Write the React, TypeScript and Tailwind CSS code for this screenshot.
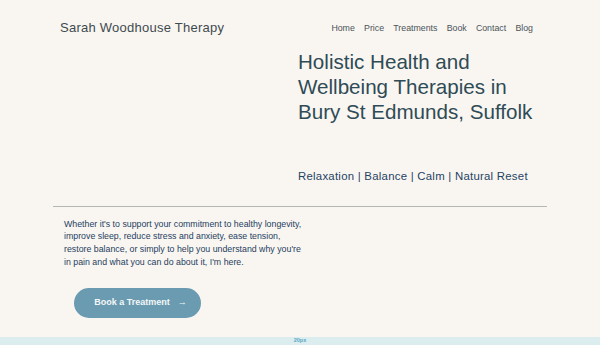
export default function App() {
  const nav = ["Home", "Price", "Treatments", "Book", "Contact", "Blog"];
  return (
    <div className="w-[600px] h-[350px] overflow-hidden bg-white font-['Liberation_Sans',Arial,sans-serif]">
      <div className="bg-[#f9f6f2] h-[337px] flex flex-col">
        <header className="flex items-center justify-between pl-[60px] pr-[67px] pt-[18px]">
          <div className="text-[13px] text-[#3f4a4e] tracking-[0.25px]">Sarah Woodhouse Therapy</div>
          <nav className="flex gap-[9.2px] text-[8.8px] text-[#4a5458] pt-[1px]">
            {nav.map((n) => (
              <span key={n}>{n}</span>
            ))}
          </nav>
        </header>

        <div className="pl-[298px] pt-[11px]">
          <h1 className="text-[20.6px] leading-[25px] text-[#2f4b55]">
            Holistic Health and
            <br />
            Wellbeing Therapies in
            <br />
            Bury St Edmunds, Suffolk
          </h1>
          <p className="mt-[44px] text-[11.4px] text-[#1f4363] tracking-[0.25px]">
            Relaxation | Balance | Calm | Natural Reset
          </p>
        </div>

        <div className="mx-[53px] mt-[21px] border-t border-[#b3b8b0]" />

        <p className="pl-[64px] pt-[11px] text-[8.8px] leading-[12.8px] text-[#253e5e]">
          Whether it's to support your commitment to healthy longevity,
          <br />
          improve sleep, reduce stress and anxiety, ease tension,
          <br />
          restore balance, or simply to help you understand why you're
          <br />
          in pain and what you can do about it, I'm here.
        </p>

        <div className="pl-[74px] pt-[19px]">
          <button className="w-[127px] h-[30px] rounded-full bg-[#6a9bb0] text-[#f4f7f8] text-[9px] font-bold flex items-center justify-center gap-[8px] pl-[6px]">
            <span>Book a Treatment</span>
            <span className="font-normal">→</span>
          </button>
        </div>
      </div>
      <div className="h-[8px] bg-[#dcedef] flex items-center justify-center">
        <span className="text-[5.5px] font-bold text-[#5aa9c4] leading-none">20px</span>
      </div>
    </div>
  );
}
